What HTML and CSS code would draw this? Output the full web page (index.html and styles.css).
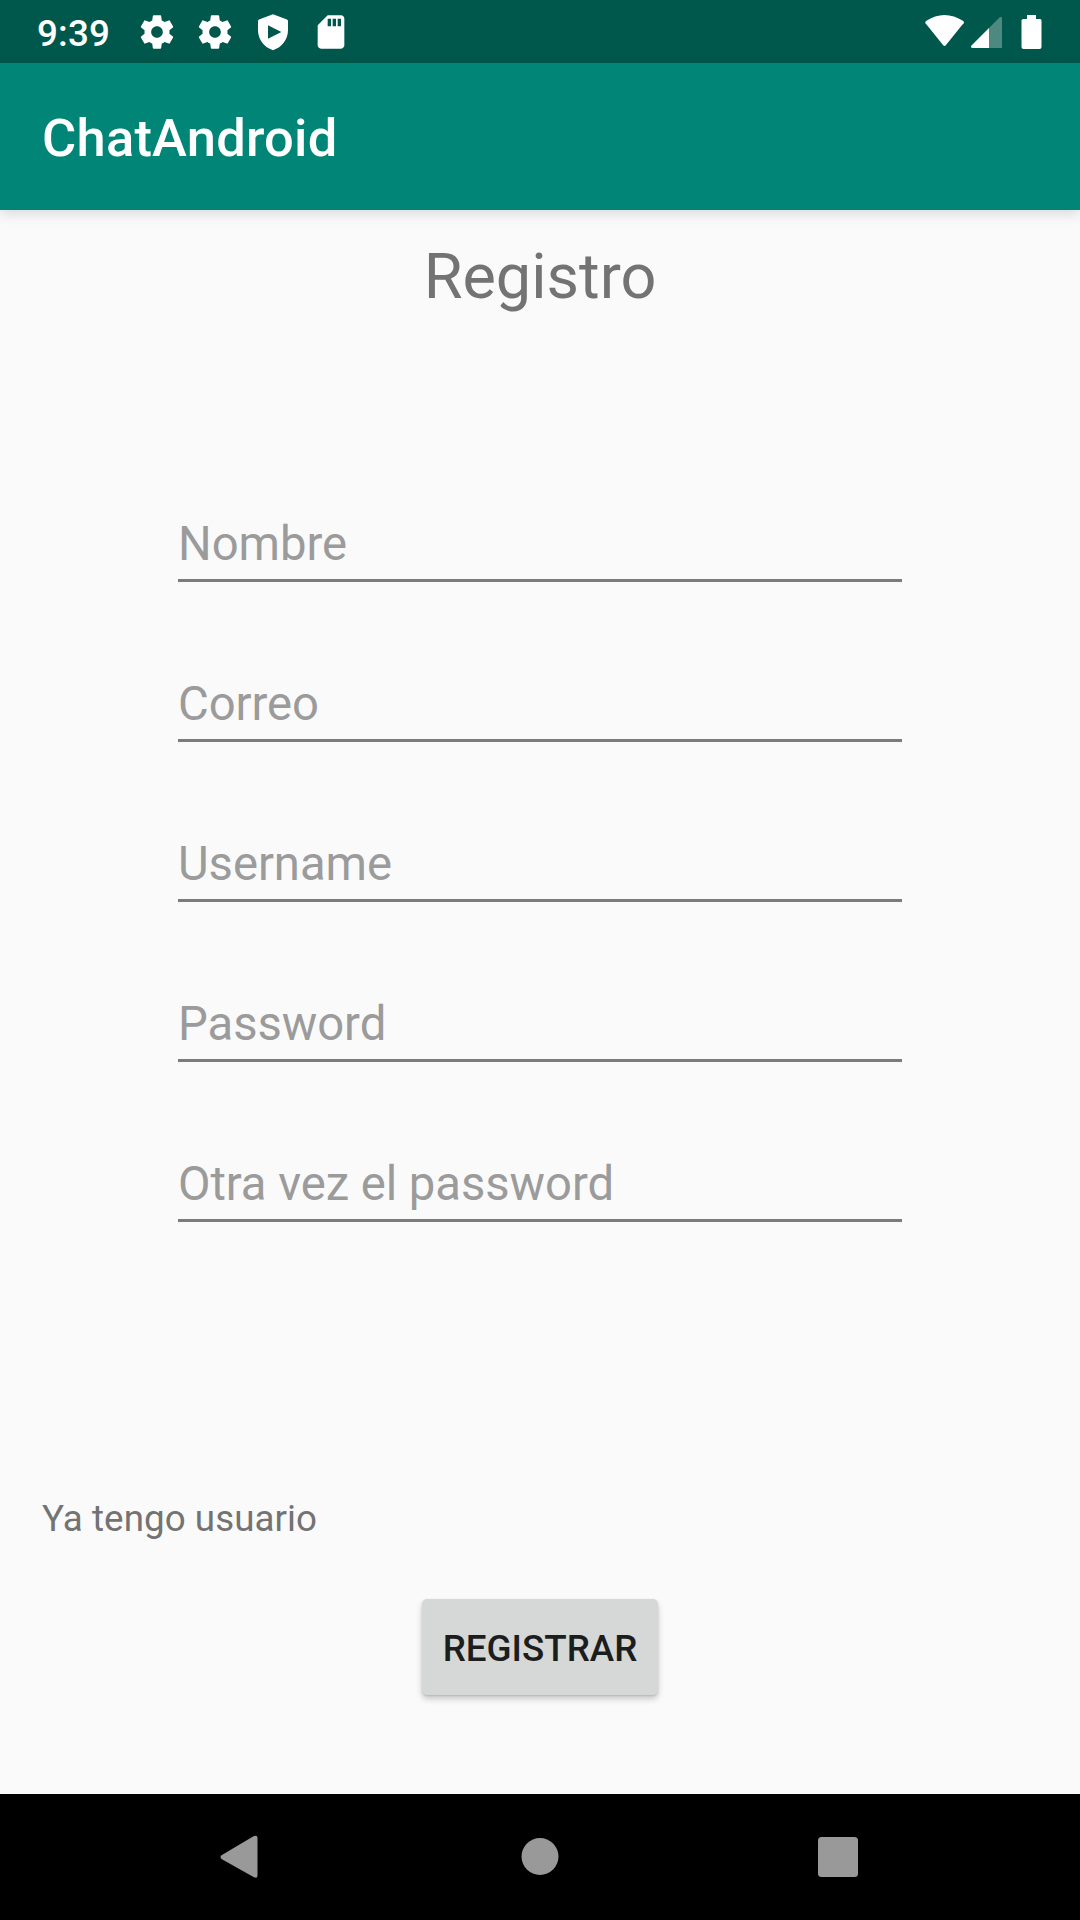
FILE: index.html
```html
<!DOCTYPE html>
<html lang="es">
<head>
<meta charset="utf-8">
<title>ChatAndroid</title>
<link rel="stylesheet" href="styles.css">
</head>
<body>
<div class="screen">
  <header class="status-bar">
    <span class="clock">9:39</span>
    <div class="notifications">
      <svg class="icon" viewBox="0 0 24 24"><path d="M19.43 12.98c.04-.32.07-.64.07-.98s-.03-.66-.07-.98l2.11-1.65c.19-.15.24-.42.12-.64l-2-3.46c-.12-.22-.39-.3-.61-.22l-2.49 1c-.52-.4-1.08-.73-1.69-.98l-.38-2.65A.488.488 0 0 0 14 2h-4c-.25 0-.46.18-.49.42l-.38 2.65c-.61.25-1.17.59-1.69.98l-2.49-1c-.23-.09-.49 0-.61.22l-2 3.46c-.13.22-.07.49.12.64l2.11 1.65c-.04.32-.07.65-.07.98s.03.66.07.98l-2.11 1.65c-.19.15-.24.42-.12.64l2 3.46c.12.22.39.3.61.22l2.49-1c.52.4 1.08.73 1.69.98l.38 2.65c.03.24.24.42.49.42h4c.25 0 .46-.18.49-.42l.38-2.65c.61-.25 1.17-.59 1.69-.98l2.49 1c.23.09.49 0 .61-.22l2-3.46c.12-.22.07-.49-.12-.64l-2.11-1.65zM12 15.5c-1.93 0-3.5-1.57-3.5-3.5s1.57-3.5 3.5-3.5 3.5 1.57 3.5 3.5-1.57 3.5-3.5 3.5z"/></svg>
      <svg class="icon" viewBox="0 0 24 24"><path d="M19.43 12.98c.04-.32.07-.64.07-.98s-.03-.66-.07-.98l2.11-1.65c.19-.15.24-.42.12-.64l-2-3.46c-.12-.22-.39-.3-.61-.22l-2.49 1c-.52-.4-1.08-.73-1.69-.98l-.38-2.65A.488.488 0 0 0 14 2h-4c-.25 0-.46.18-.49.42l-.38 2.65c-.61.25-1.17.59-1.69.98l-2.49-1c-.23-.09-.49 0-.61.22l-2 3.46c-.13.22-.07.49.12.64l2.11 1.65c-.04.32-.07.65-.07.98s.03.66.07.98l-2.11 1.65c-.19.15-.24.42-.12.64l2 3.46c.12.22.39.3.61.22l2.49-1c.52.4 1.08.73 1.69.98l.38 2.65c.03.24.24.42.49.42h4c.25 0 .46-.18.49-.42l.38-2.65c.61-.25 1.17-.59 1.69-.98l2.49 1c.23.09.49 0 .61-.22l2-3.46c.12-.22.07-.49-.12-.64l-2.11-1.65zM12 15.5c-1.93 0-3.5-1.57-3.5-3.5s1.57-3.5 3.5-3.5 3.5 1.57 3.5 3.5-1.57 3.5-3.5 3.5z"/></svg>
      <svg class="icon" viewBox="0 0 24 24"><path fill-rule="evenodd" d="M12 1.300 3.600 4.500Q3 4.800 3 5.400V11c0 5.500 3.600 10.300 9 11.900 5.400-1.600 9-6.400 9-11.900V5.400Q21 4.800 20.400 4.500ZM9 8v8l8-4Z"/></svg>
      <svg class="icon" viewBox="0 0 24 24"><path fill-rule="evenodd" d="M18 2h-8L4.020 8 4 20c0 1.100.9 2 2 2h12c1.100 0 2-.9 2-2V4c0-1.100-.9-2-2-2zM10 4v4.500h2V4zM13 4v4.500h2V4zM16 4v4.500h2V4z"/></svg>
    </div>
    <svg class="system-icons" viewBox="0 0 120 36">
      <path d="M2.500 10.500Q0.300 8.800 2 7Q11 1 20.500 1Q30 1 39.300 7Q41 8.800 38.500 10.500L22 31Q20.500 33 19 31Z"/>
      <path class="dim" d="M65 14 75.500 3.500Q78 1.500 78 5V34H65Z"/>
      <path d="M65 14V34H49Q46 34 47.500 31.500Z"/>
      <path d="M103 1h9v4h4q1.500 0 1.500 1.500V33q0 2-2 2h-16q-2 0-2-2V6.500Q97.500 5 99.500 5H103Z"/>
    </svg>
  </header>
  <div class="app-bar"><h1 class="app-title">ChatAndroid</h1></div>
  <main class="content">
    <h2 class="heading">Registro</h2>
    <form class="form">
      <input class="field" type="text" placeholder="Nombre">
      <input class="field" type="email" placeholder="Correo">
      <input class="field" type="text" placeholder="Username">
      <input class="field" type="password" placeholder="Password">
      <input class="field" type="password" placeholder="Otra vez el password">
    </form>
    <a class="login-link">Ya tengo usuario</a>
    <button class="submit" type="button">REGISTRAR</button>
  </main>
  <nav class="nav-bar">
    <svg class="nav-icon" viewBox="0 0 44 44"><path d="M2.500 20.300 34.500 1.300Q38.500-.5 38.500 3V40.500Q38.500 44 34.500 42L2.500 24Q.5 22 2.500 20.300Z"/></svg>
    <svg class="nav-icon" viewBox="0 0 44 44"><circle cx="22" cy="21.500" r="18.500"/></svg>
    <svg class="nav-icon" viewBox="0 0 44 44"><rect x="2" y="2" width="40" height="40" rx="3.500"/></svg>
  </nav>
</div>
</body>
</html>
```
FILE: styles.css
```css
* { box-sizing: border-box; }

body {
  margin: 0;
  font-family: Roboto, sans-serif;
  background: #fafafa;
}

.screen {
  width: 1080px;
  height: 1920px;
  display: flex;
  flex-direction: column;
  overflow: hidden;
}

.status-bar {
  height: 63px;
  flex: none;
  display: flex;
  align-items: center;
  padding: 0 36px 0 37px;
  background: #00574b;
  color: #fff;
}

.clock {
  width: 100px;
  padding-top: 4px;
  font-size: 36.75px;
  font-weight: 500;
  line-height: 44px;
  letter-spacing: .15px;
}

.notifications {
  display: flex;
  gap: 18px;
}

.icon {
  display: block;
  width: 40px;
  height: 40px;
  fill: #fff;
}

.system-icons {
  width: 120px;
  height: 36px;
  margin-left: auto;
  fill: #fff;
}

.dim { opacity: .3; }

.app-bar {
  height: 147px;
  flex: none;
  display: flex;
  align-items: center;
  padding: 3px 42px 0;
  background: #008577;
  color: #fff;
  box-shadow: 0 4px 12px rgba(0, 0, 0, .13);
}

.app-title {
  margin: 0;
  font-size: 52.5px;
  font-weight: 500;
  line-height: 62px;
  letter-spacing: .22px;
}

.content {
  flex: 1;
  display: flex;
  flex-direction: column;
  align-items: center;
  padding-top: 30px;
}

.heading {
  margin: 0;
  font-size: 63px;
  font-weight: 400;
  line-height: 74px;
  color: #737373;
}

.form {
  width: 724px;
  margin-top: 188px;
  display: flex;
  flex-direction: column;
  gap: 80px;
}

.field {
  width: 100%;
  height: 80px;
  padding: 6px 0 0;
  border: 0;
  border-bottom: 3px solid #7b7b7b;
  border-radius: 0;
  outline: 0;
  background: none;
  font-family: inherit;
  font-size: 47.25px;
  line-height: 56px;
  letter-spacing: -.06px;
}

.field::placeholder {
  color: #9b9b9b;
  opacity: 1;
}

.login-link {
  align-self: flex-start;
  margin: 275px 0 0 42px;
  font-size: 36.75px;
  line-height: 44px;
  letter-spacing: .05px;
  color: #737373;
}

.submit {
  width: 236px;
  height: 96px;
  margin-top: 58px;
  padding: 3px 0 0;
  border: 0;
  border-radius: 5px;
  background: #d6d7d7;
  box-shadow: 0 4px 6px rgba(0, 0, 0, .2), 0 1px 2px rgba(0, 0, 0, .12);
  color: #1c1d1d;
  font-family: inherit;
  font-size: 36.75px;
  font-weight: 500;
}

.nav-bar {
  height: 126px;
  flex: none;
  display: flex;
  align-items: center;
  justify-content: space-between;
  padding: 0 220px 0 219px;
  background: #000;
}

.nav-icon {
  width: 44px;
  height: 44px;
  fill: #999;
}
```
